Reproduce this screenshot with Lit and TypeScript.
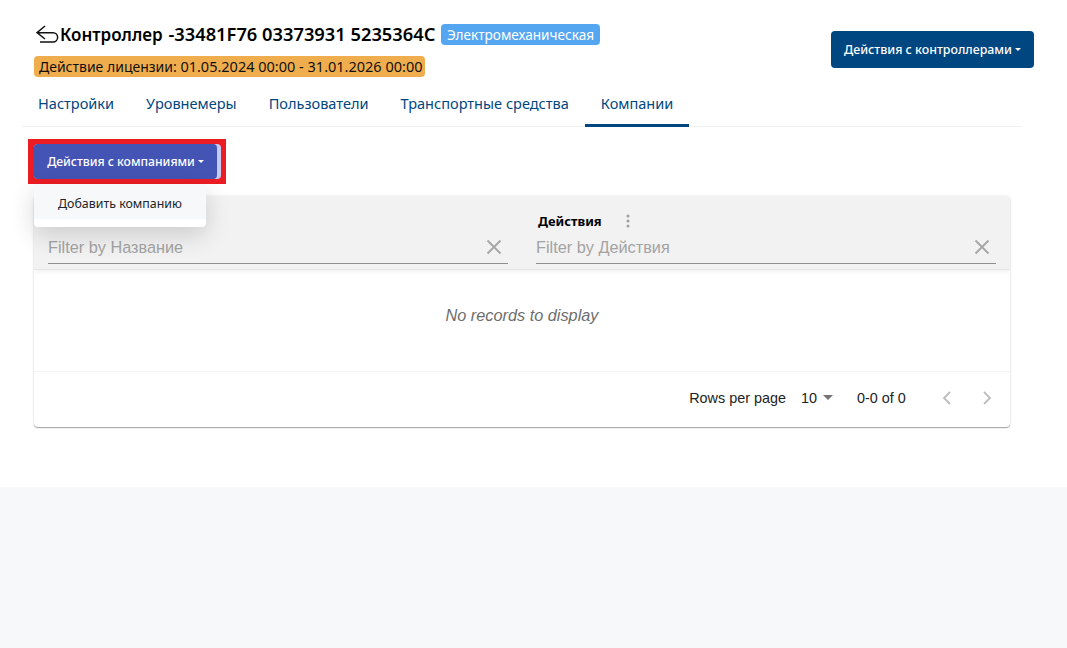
import { LitElement, html, css } from "lit";
import { customElement } from "lit/decorators.js";

@customElement("app-root")
export class AppRoot extends LitElement {
  static styles = css`
    :host { display: block; height: 648px; background: #f7f8fa; font-family: "Noto Sans", sans-serif; color: #000; overflow: hidden; }
    .page { background: #fff; height: 487px; box-sizing: border-box; padding: 24px 33px 0 22px; }
    .head { display: flex; justify-content: space-between; align-items: flex-start; padding-left: 12px; height: 62px; }
    .title-row { display: flex; align-items: flex-start; height: 22px; }
    .back { width: 24px; height: 20px; margin: 1px 0 0 2px; flex: none; }
    h1 { margin: 0; font-size: 18.3px; font-weight: 600; line-height: 20px; white-space: nowrap; width: 381px; }
    h1 span { font-size: 17px; margin-right: 1px; }
    .type { background: #55a6f0; color: #fff; font-size: 13.6px; line-height: 21px; height: 21px; border-radius: 4px; white-space: nowrap; width: 159px; text-align: center; }
    .license { display: inline-block; margin-top: 10px; background: #f0ad4e; border-radius: 4px; font-size: 14px; line-height: 21px; height: 21px; padding: 0 0 0 5px; width: 386px; white-space: nowrap; color: #111; }
    .license span { font-size: 14.5px; }
    .btn { border: none; color: #fff; font-family: inherit; font-weight: 500; border-radius: 4px; display: flex; align-items: center; white-space: nowrap; padding: 0; }
    .caret { display: inline-block; margin-left: 3px; border-top: 3.5px solid #fff; border-left: 3.5px solid transparent; border-right: 3.5px solid transparent; }
    .ctl { background: #004680; width: 203px; height: 37px; margin-top: 7px; padding-bottom: 1px; justify-content: center; font-size: 12.4px; }
    .tabs { display: flex; width: 1000px; height: 41px; box-shadow: inset 0 -1px 0 #f0f0f0; }
    .tab { padding: 0 16px; height: 41px; line-height: 35px; font-size: 14.55px; color: #004680; white-space: nowrap; box-sizing: border-box; }
    .tab.active { border-bottom: 3px solid #004680; }
    .body { padding: 12px 0 0 6px; position: relative; }
    .hl { display: inline-flex; background: #ec1c24; padding: 5px 5px 5px 6px; vertical-align: top; }
    .strip { display: flex; background: #c3cbf2; border-radius: 4px; padding-right: 4px; }
    .comp { background: #4454b4; width: 183px; height: 35px; justify-content: center; font-size: 12.2px; }
    .menu { position: absolute; left: 12px; top: 57px; width: 172px; height: 43px; background: #fff; border-radius: 0 0 4px 4px; z-index: 3; box-shadow: 0 8px 24px rgba(0,0,0,.16); box-sizing: border-box; font-size: 12.4px; color: #212529; }
    .menu div { background: #f7f8fa; height: 35px; line-height: 40px; text-align: center; }
    .card { margin: 12px 0 0 6px; width: 976px; height: 231px; background: #fff; border-radius: 4px; box-shadow: 0 1px 1px rgba(0,0,0,.35), 0 0 3px rgba(0,0,0,.1); overflow: hidden; }
    .thead { background: #f2f2f2; height: 74px; display: grid; grid-template-columns: 460px 460px; column-gap: 28px; padding: 0 14px; border-bottom: 1px solid #e6e6e6; box-shadow: 0 2px 4px rgba(0,0,0,.06); box-sizing: border-box; }
    .col { padding-top: 16px; }
    .col-title { display: flex; align-items: center; height: 18px; font-size: 12.9px; font-weight: 700; padding-left: 2px; }
    .dots { margin-left: 24px; }
    .filter { display: flex; justify-content: space-between; align-items: center; border-bottom: 1px solid #8f8f8f; height: 34px; padding: 1px 6px 0 0; box-sizing: border-box; font-family: "Liberation Sans", sans-serif; font-size: 16.3px; color: #a3a3a3; }
    .x { width: 16px; height: 16px; }
    .empty { height: 102px; padding-bottom: 10px; border-bottom: 1px solid #f4f4f4; display: flex; align-items: center; justify-content: center; font-family: "Liberation Sans", sans-serif; font-style: italic; font-size: 16.3px; color: #6e6e6e; box-sizing: border-box; }
    .foot { height: 55px; display: flex; align-items: center; justify-content: flex-end; font-family: "Liberation Sans", sans-serif; font-size: 14.4px; color: #222; padding: 0 18px 4px 0; box-sizing: border-box; }
    .sel { margin-left: 15px; display: flex; align-items: center; gap: 6px; }
    .tri { border-top: 5px solid #757575; border-left: 5px solid transparent; border-right: 5px solid transparent; }
    .range { margin-left: 24px; width: 52px; }
    .nav { width: 10px; height: 14px; margin-left: 30px; }
    .nav.first { margin-left: 33px; }
  `;
  render() {
    const x = html`<svg class="x" viewBox="0 0 16 16"><path d="M1.5 1.5 14.5 14.5M14.5 1.5 1.5 14.5" stroke="#a6a6a6" stroke-width="1.8" fill="none"/></svg>`;
    return html`<div class="page">
      <div class="head">
        <div>
          <div class="title-row">
            <svg class="back" viewBox="0 0 24 20"><path d="M9 1 1 7.7 9 14M1 7.7H17a4.6 4.6 0 0 1 0 9.3H4" fill="none" stroke="#111" stroke-width="1.5"/></svg>
            <h1><span>Контроллер</span> -33481F76 03373931 5235364C</h1>
            <span class="type">Электромеханическая</span>
          </div>
          <span class="license">Действие лицензии: <span>01.05.2024 00:00 - 31.01.2026 00:00</span></span>
        </div>
        <button class="btn ctl">Действия с контроллерами<i class="caret"></i></button>
      </div>
      <div class="tabs">
        <div class="tab">Настройки</div><div class="tab">Уровнемеры</div><div class="tab">Пользователи</div><div class="tab">Транспортные средства</div><div class="tab active">Компании</div>
      </div>
      <div class="body">
        <div class="hl"><div class="strip"><button class="btn comp">Действия с компаниями<i class="caret"></i></button></div></div>
        <div class="menu"><div>Добавить компанию</div></div>
        <div class="card">
          <div class="thead">
            <div class="col"><div class="col-title">Название</div><div class="filter">Filter by Название ${x}</div></div>
            <div class="col"><div class="col-title">Действия
              <svg class="dots" width="4" height="14" viewBox="0 0 4 14"><circle cx="2" cy="2" r="1.5" fill="#a0a0a0"/><circle cx="2" cy="7" r="1.5" fill="#a0a0a0"/><circle cx="2" cy="12" r="1.5" fill="#a0a0a0"/></svg>
            </div><div class="filter">Filter by Действия ${x}</div></div>
          </div>
          <div class="empty">No records to display</div>
          <div class="foot">
            <span>Rows per page</span>
            <span class="sel">10 <i class="tri"></i></span>
            <span class="range">0-0 of 0</span>
            <svg class="nav first" viewBox="0 0 10 14"><path d="M8 1 2 7 8 13" fill="none" stroke="#bdbdbd" stroke-width="1.8"/></svg>
            <svg class="nav" viewBox="0 0 10 14"><path d="M2 1 8 7 2 13" fill="none" stroke="#bdbdbd" stroke-width="1.8"/></svg>
          </div>
        </div>
      </div>
    </div>`;
  }
}
